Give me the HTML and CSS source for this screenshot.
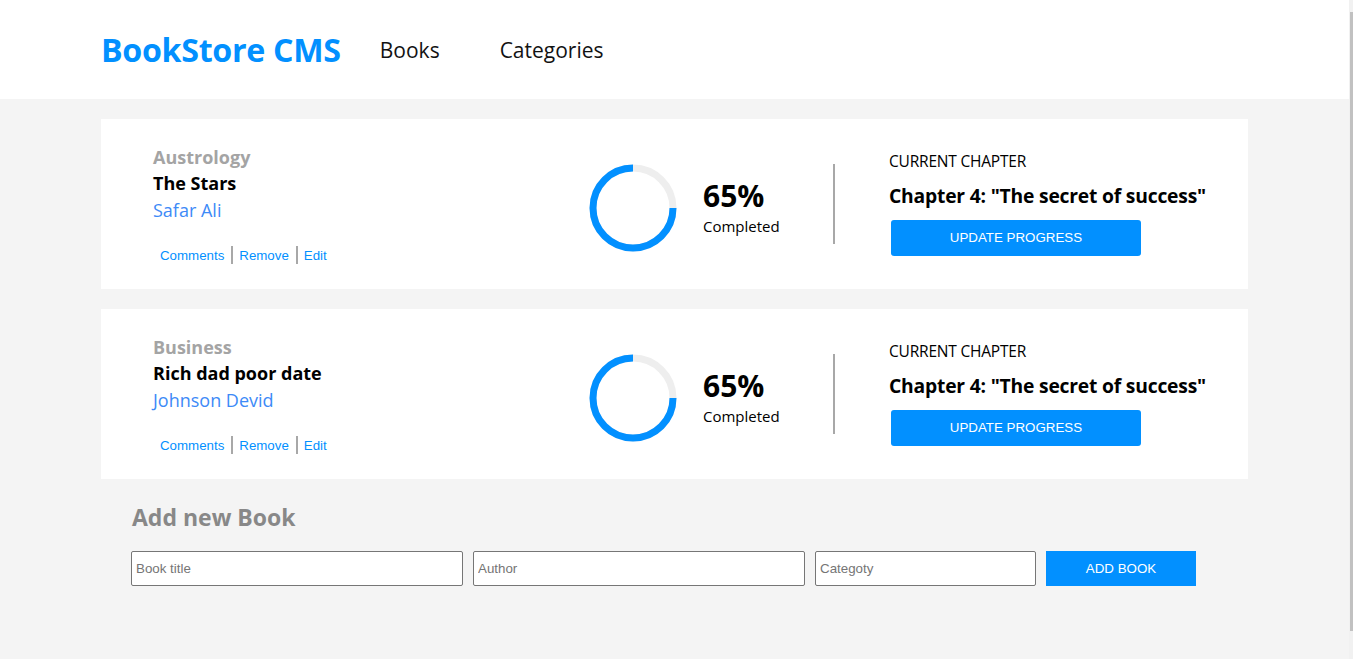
FILE: index.html
```html
<!DOCTYPE html>
<html lang="en">
<head>
<meta charset="utf-8">
<title>BookStore CMS</title>
<link rel="stylesheet" href="styles.css">
</head>
<body>
<div class="app">
  <div class="page">
    <header class="header">
      <h1 class="logo">BookStore CMS</h1>
      <nav class="nav">
        <a href="#" class="nav-link">Books</a>
        <a href="#" class="nav-link">Categories</a>
      </nav>
    </header>
    <main class="main">
      <ul class="book-list">
        <li class="card">
          <div class="info">
            <p class="category">Austrology</p>
            <h2 class="title">The Stars</h2>
            <p class="author">Safar Ali</p>
            <div class="actions">
              <button class="action">Comments</button>
              <span class="sep"></span>
              <button class="action">Remove</button>
              <span class="sep"></span>
              <button class="action">Edit</button>
            </div>
          </div>
          <div class="progress">
            <svg class="ring" width="90" height="90" viewBox="0 0 90 90">
              <circle cx="45" cy="45" r="40" fill="none" stroke="#eeeeee" stroke-width="7"/>
              <path d="M85 45 A40 40 0 1 1 45 5" fill="none" stroke="#0290ff" stroke-width="7"/>
            </svg>
            <div class="percent">
              <p class="pct">65%</p>
              <p class="done">Completed</p>
            </div>
          </div>
          <div class="divider"></div>
          <div class="chapter">
            <p class="chapter-label">CURRENT CHAPTER</p>
            <p class="chapter-name">Chapter 4: "The secret of success"</p>
            <button class="update">UPDATE PROGRESS</button>
          </div>
        </li>
        <li class="card">
          <div class="info">
            <p class="category">Business</p>
            <h2 class="title">Rich dad poor date</h2>
            <p class="author">Johnson Devid</p>
            <div class="actions">
              <button class="action">Comments</button>
              <span class="sep"></span>
              <button class="action">Remove</button>
              <span class="sep"></span>
              <button class="action">Edit</button>
            </div>
          </div>
          <div class="progress">
            <svg class="ring" width="90" height="90" viewBox="0 0 90 90">
              <circle cx="45" cy="45" r="40" fill="none" stroke="#eeeeee" stroke-width="7"/>
              <path d="M85 45 A40 40 0 1 1 45 5" fill="none" stroke="#0290ff" stroke-width="7"/>
            </svg>
            <div class="percent">
              <p class="pct">65%</p>
              <p class="done">Completed</p>
            </div>
          </div>
          <div class="divider"></div>
          <div class="chapter">
            <p class="chapter-label">CURRENT CHAPTER</p>
            <p class="chapter-name">Chapter 4: "The secret of success"</p>
            <button class="update">UPDATE PROGRESS</button>
          </div>
        </li>
      </ul>
      <section class="add">
        <h2 class="add-title">Add new Book</h2>
        <form class="add-form">
          <input class="field field-title" type="text" placeholder="Book title">
          <input class="field field-author" type="text" placeholder="Author">
          <input class="field field-cat" type="text" placeholder="Categoty">
          <button type="button" class="add-btn">ADD BOOK</button>
        </form>
      </section>
    </main>
  </div>
  <div class="scrollbar"><div class="thumb"></div></div>
</div>
</body>
</html>
```

FILE: styles.css
```css
* { box-sizing: border-box; }
html, body { margin: 0; padding: 0; }
body {
  background: #f4f4f4;
  font-family: "Open Sans", "Noto Sans", sans-serif;
  color: #000;
  height: 659px;
  overflow: hidden;
}
.app { display: flex; height: 659px; }
.page { flex: 1; min-width: 0; }
.scrollbar {
  width: 4px;
  background: #f1f1f1;
  display: flex;
  justify-content: flex-end;
}
.thumb {
  width: 3px;
  height: 619px;
  margin-top: 12px;
  background: #c1c1c1;
}
p, h1, h2, ul { margin: 0; padding: 0; }
ul { list-style: none; }

.header {
  background: #fff;
  height: 99px;
  display: flex;
  align-items: center;
  padding: 0 101px;
}
.logo {
  font-size: 32.2px;
  font-weight: 700;
  color: #0290ff;
  margin-right: 39px;
  letter-spacing: -0.3px;
}
.nav { display: flex; gap: 60px; }
.nav-link {
  color: #121212;
  text-decoration: none;
  font-size: 21px;
}

.main { padding: 20px 101px 0; }
.book-list { display: flex; flex-direction: column; gap: 20px; }
.card {
  background: #fff;
  height: 170px;
  display: flex;
  align-items: center;
  padding-left: 52px;
}
.info { flex: 1; }
.category {
  font-size: 18px;
  font-weight: 700;
  color: #a4a4a4;
  line-height: 26px;
}
.title {
  font-size: 18px;
  font-weight: 700;
  line-height: 27px;
}
.author {
  font-size: 18px;
  color: #3d8af7;
  line-height: 27px;
}
.actions {
  display: flex;
  align-items: center;
  margin-top: 22px;
  padding-left: 7px;
}
.action {
  border: 0;
  background: none;
  padding: 0 7px 0 0;
  font-family: "Liberation Sans", Arial, sans-serif;
  font-size: 13.3px;
  color: #0290ff;
}
.sep {
  width: 2px;
  height: 18px;
  background: #a8a8a8;
  margin-right: 6px;
}

.progress {
  display: flex;
  align-items: center;
  gap: 25px;
  width: 224px;
  margin-top: 8px;
}
.ring { display: block; margin-left: -2px; }
.percent { margin-top: -2px; }
.pct {
  font-size: 30px;
  font-weight: 700;
  line-height: 36px;
}
.done {
  font-size: 15px;
  line-height: 20px;
  margin-top: 2px;
}
.divider {
  width: 2px;
  height: 80px;
  background: #a8a8a8;
  margin: 0 54px 0 19px;
}
.chapter { width: 359px; margin-top: -2px; }
.chapter-label {
  font-size: 15.5px;
  line-height: 20px;
  letter-spacing: -0.2px;
}
.chapter-name {
  font-size: 19.3px;
  font-weight: 700;
  line-height: 26px;
  margin-top: 12px;
  letter-spacing: -0.2px;
}
.update {
  margin: 11px 0 0 2px;
  width: 250px;
  height: 36px;
  border: 0;
  border-radius: 3px;
  background: #0290ff;
  color: #fff;
  font-family: "Liberation Sans", Arial, sans-serif;
  font-size: 13.33px;
}

.add { padding: 22px 0 0 30px; }
.add-title {
  font-size: 23px;
  font-weight: 700;
  color: #888;
  line-height: 32px;
  padding-left: 1px;
}
.add-form {
  display: flex;
  gap: 10px;
  margin-top: 18px;
}
.field {
  height: 35px;
  border: 1px solid #767676;
  border-radius: 2px;
  padding: 0 4px;
  font-family: "Liberation Sans", Arial, sans-serif;
  font-size: 13.33px;
  background: #fff;
}
.field::placeholder { color: #757575; }
.field-title, .field-author { width: 332px; }
.field-cat { width: 221px; }
.add-btn {
  width: 150px;
  height: 35px;
  border: 0;
  background: #0290ff;
  color: #fff;
  font-family: "Liberation Sans", Arial, sans-serif;
  font-size: 13.33px;
}
```
